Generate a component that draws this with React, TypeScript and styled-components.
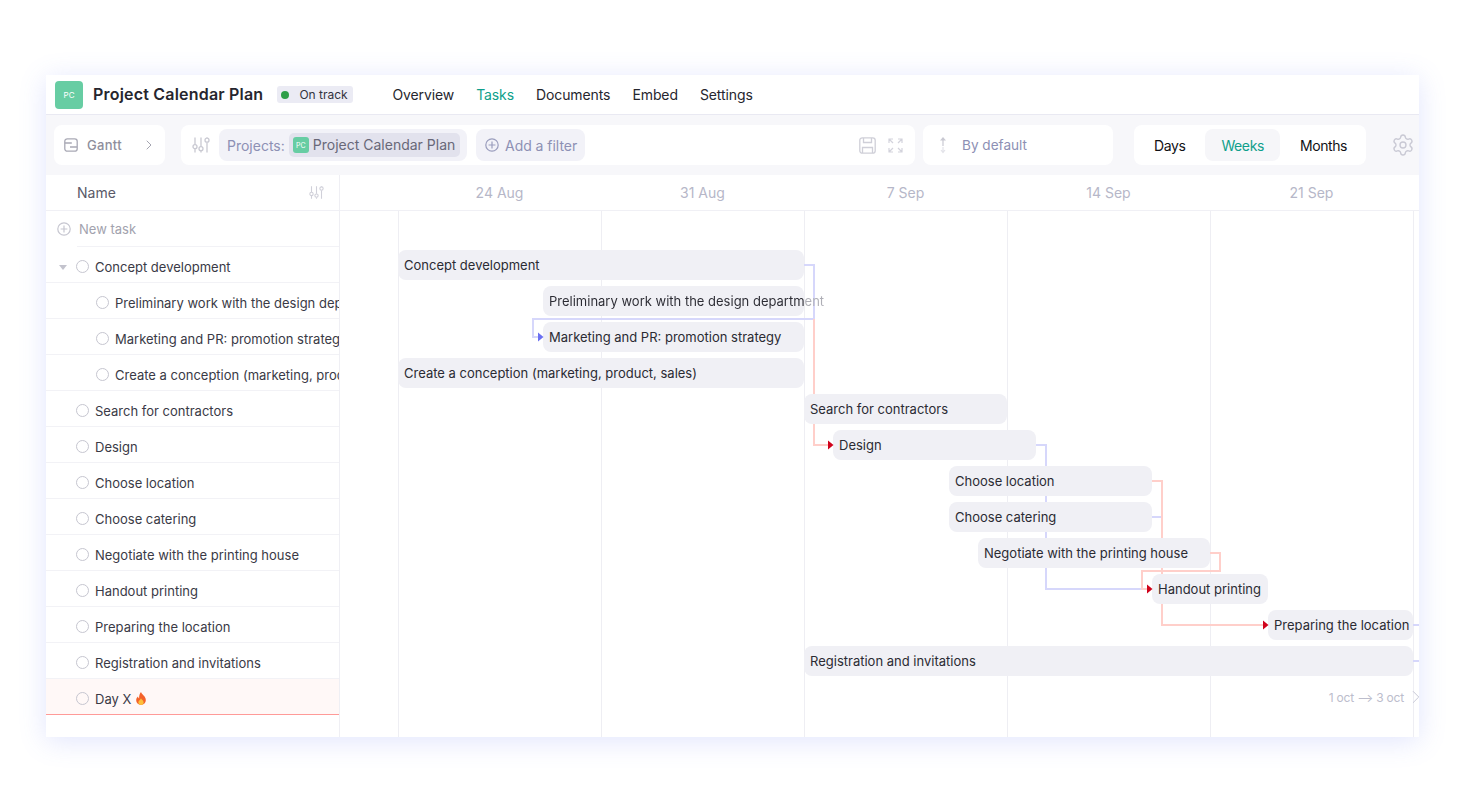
import React from 'react';
import styled, { createGlobalStyle } from 'styled-components';
import { ChevronRight, Settings } from 'lucide-react';

const Global = createGlobalStyle`
  html, body { margin: 0; padding: 0; background: #fff; }
  body { font-family: Inter, "Noto Sans", sans-serif; -webkit-font-smoothing: antialiased; }
  * { box-sizing: border-box; }
`;

const Page = styled.div`
  width: 1466px;
  height: 811px;
  padding: 75px 47px 0 46px;
  overflow: hidden;
`;
const Card = styled.div`
  width: 1373px;
  height: 662px;
  background: #fff;
  box-shadow: 0 4px 26px rgba(90, 110, 245, 0.18);
  display: flex;
  flex-direction: column;
  overflow: hidden;
`;
const Header = styled.header`
  height: 40px;
  flex: none;
  display: flex;
  align-items: center;
  padding-left: 9px;
  border-bottom: 1px solid #e9e9f2;
`;
const Logo = styled.div<{ $small?: boolean }>`
  width: ${p => (p.$small ? 16 : 28)}px;
  height: ${p => (p.$small ? 16 : 28)}px;
  border-radius: ${p => (p.$small ? 3 : 4)}px;
  background: #67cda3;
  color: #fff;
  display: flex;
  align-items: center;
  justify-content: center;
  font-size: ${p => (p.$small ? 7 : 8)}px;
  flex: none;
`;
const Title = styled.h1`
  margin: 0 0 0 10px;
  padding-bottom: 2px;
  font-size: 16px;
  font-weight: 600;
  letter-spacing: 0.2px;
  color: #26262e;
  line-height: 20px;
  white-space: nowrap;
`;
const Badge = styled.div`
  margin-left: 14px;
  height: 17px;
  width: 76px;
  background: #ebebf4;
  border-radius: 3px;
  display: flex;
  align-items: center;
  padding-left: 4px;
  gap: 10px;
  font-size: 12px;
  color: #33333d;
`;
const Dot = styled.span`
  width: 8px;
  height: 8px;
  border-radius: 50%;
  background: #2e9e48;
`;
const Nav = styled.nav`
  margin-left: 39px;
  display: flex;
  gap: 22px;
`;
const NavItem = styled.span<{ $active?: boolean }>`
  font-size: 14px;
  letter-spacing: -0.1px;
  color: ${p => (p.$active ? '#109f8b' : '#26262e')};
`;
const Toolbar = styled.div`
  height: 60px;
  flex: none;
  background: #f7f7fa;
  display: flex;
  align-items: center;
  padding-left: 8px;
`;
const Panel = styled.div<{ $w: number; $ml: number }>`
  width: ${p => p.$w}px;
  margin-left: ${p => p.$ml}px;
  height: 40px;
  background: #fff;
  border-radius: 8px;
  display: flex;
  align-items: center;
  flex: none;
`;
const IconSlot = styled.span<{ $ml?: number; $mr?: number }>`
  display: flex;
  flex: none;
  margin-left: ${p => p.$ml ?? 0}px;
  margin-right: ${p => p.$mr ?? 0}px;
`;
const GanttLabel = styled.span`
  margin-left: 9px;
  font-size: 13px;
  font-weight: 500;
  letter-spacing: 0.3px;
  color: #8e8e9c;
  flex: 1;
`;
const FilterChip = styled.div<{ $w: number; $ml: number }>`
  width: ${p => p.$w}px;
  margin-left: ${p => p.$ml}px;
  height: 32px;
  border-radius: 8px;
  background: #f2f2f8;
  display: flex;
  align-items: center;
  font-size: 14px;
  color: #8d90b4;
  flex: none;
`;
const ChipLabel = styled.span`
  margin-left: 8px;
`;
const FilterText = styled.span`
  letter-spacing: -0.03px;
`;
const ProjectChip = styled.div`
  margin-left: 4px;
  width: 171px;
  height: 24px;
  border-radius: 5px;
  background: #e2e2ed;
  display: flex;
  align-items: center;
  padding-left: 4px;
  gap: 4px;
  color: #686878;
  font-size: 14px;
  white-space: nowrap;
`;
const ProjectName = styled.span`
  padding-bottom: 2px;
`;
const Spring = styled.div`
  flex: 1;
`;
const SortLabel = styled.span`
  margin-left: 14px;
  font-size: 13.6px;
  color: #8d90b4;
`;
const SegmentGroup = styled.div`
  display: flex;
  align-items: center;
  gap: 20px;
  padding-left: 20px;
`;
const Segment = styled.div<{ $active?: boolean }>`
  height: 32px;
  padding: 0 ${p => (p.$active ? 16 : 0)}px;
  border-radius: 8px;
  display: flex;
  align-items: center;
  font-size: 14px;
  letter-spacing: -0.4px;
  color: ${p => (p.$active ? '#109f8b' : '#111116')};
  background: ${p => (p.$active ? '#f6f6f9' : 'transparent')};
`;
const GearSlot = styled.div`
  margin-left: 25px;
  color: #c9c9d4;
  display: flex;
`;
const Body = styled.div`
  flex: 1;
  display: flex;
  min-height: 0;
`;
const Sidebar = styled.aside`
  width: 294px;
  flex: none;
  border-right: 1px solid #efeff4;
  display: flex;
  flex-direction: column;
`;
const NameHead = styled.div`
  height: 36px;
  flex: none;
  border-bottom: 1px solid #f0f0f5;
  display: flex;
  align-items: center;
  padding: 0 15px 0 31px;
  justify-content: space-between;
  font-size: 14px;
  color: #5a5a68;
`;
const NewTask = styled.div`
  height: 36px;
  flex: none;
  position: relative;
  display: flex;
  align-items: center;
  padding: 0 0 0 11px;
  gap: 8px;
  font-size: 13px;
  color: #a2a2ae;
  &::after {
    content: '';
    position: absolute;
    left: 31px;
    right: 0;
    bottom: 0;
    height: 1px;
    background: #f2f2f6;
  }
`;
const Row = styled.div<{ $level: number; $hot?: boolean }>`
  height: 36px;
  flex: none;
  display: flex;
  align-items: center;
  padding: 4px 0 0 ${p => (p.$level ? 50 : 30)}px;
  gap: 6px;
  font-size: 13px;
  color: #3a3a46;
  white-space: nowrap;
  overflow: hidden;
  position: relative;
  background: ${p => (p.$hot ? '#fff8f7' : 'transparent')};
  border-bottom: 1px solid ${p => (p.$hot ? '#ff9a98' : '#f2f2f6')};
`;
const Caret = styled.span`
  position: absolute;
  left: 13px;
  top: 18px;
  width: 0;
  height: 0;
  border-left: 4px solid transparent;
  border-right: 4px solid transparent;
  border-top: 5px solid #c3c3cd;
`;
const Circle = styled.span`
  width: 13px;
  height: 13px;
  border-radius: 50%;
  border: 1.6px solid #c6c6d0;
  flex: none;
`;
const Flame = styled.svg`
  margin-left: -2px;
  flex: none;
`;
const Chart = styled.section`
  flex: 1;
  display: flex;
  flex-direction: column;
  min-width: 0;
`;
const ChartHead = styled.div`
  height: 36px;
  flex: none;
  border-bottom: 1px solid #f0f0f5;
  display: flex;
  padding-left: 58px;
`;
const DateCell = styled.div`
  width: 203px;
  flex: none;
  text-align: center;
  font-size: 14px;
  line-height: 35px;
  color: #b6b7c8;
`;
const Canvas = styled.div`
  flex: 1;
  position: relative;
  overflow: hidden;
`;
const Grid = styled.div`
  position: absolute;
  inset: 0;
  display: flex;
  padding-left: 58px;
`;
const GridCol = styled.div`
  width: 203px;
  flex: none;
  border-left: 1px solid #eeeef3;
`;
const Links = styled.svg`
  position: absolute;
  left: 0;
  top: 0;
`;
const Bar = styled.div<{ $x: number; $y: number; $w: number }>`
  position: absolute;
  left: ${p => p.$x}px;
  top: ${p => p.$y}px;
  width: ${p => p.$w}px;
  height: 30px;
  border-radius: 8px;
  background: #f0f0f5;
  display: flex;
  align-items: center;
  padding-left: 6px;
  font-size: 13px;
  color: #2b2b33;
  white-space: nowrap;
`;
const FadedText = styled.span`
  background: linear-gradient(90deg, #2b2b33 255px, #aeaeb6 255px);
  -webkit-background-clip: text;
  background-clip: text;
  color: transparent;
`;
const Range = styled.div`
  position: absolute;
  right: -8px;
  top: 475px;
  display: flex;
  align-items: center;
  gap: 1px;
  font-size: 12px;
  letter-spacing: -0.2px;
  color: #bcbdcc;
  white-space: nowrap;
`;

const tasks: { name: string; level: number; caret?: boolean; hot?: boolean }[] = [
  { name: 'Concept development', level: 0, caret: true },
  { name: 'Preliminary work with the design department', level: 1 },
  { name: 'Marketing and PR: promotion strategy', level: 1 },
  { name: 'Create a conception (marketing, product, sales)', level: 1 },
  { name: 'Search for contractors', level: 0 },
  { name: 'Design', level: 0 },
  { name: 'Choose location', level: 0 },
  { name: 'Choose catering', level: 0 },
  { name: 'Negotiate with the printing house', level: 0 },
  { name: 'Handout printing', level: 0 },
  { name: 'Preparing the location', level: 0 },
  { name: 'Registration and invitations', level: 0 },
  { name: 'Day X', level: 0, hot: true },
];

const bars: { name: string; from: number; to: number; faded?: boolean }[] = [
  { name: 'Concept development', from: 398, to: 804 },
  { name: 'Preliminary work with the design department', from: 543, to: 804, faded: true },
  { name: 'Marketing and PR: promotion strategy', from: 543, to: 804 },
  { name: 'Create a conception (marketing, product, sales)', from: 398, to: 804 },
  { name: 'Search for contractors', from: 804, to: 1007 },
  { name: 'Design', from: 833, to: 1036 },
  { name: 'Choose location', from: 949, to: 1152 },
  { name: 'Choose catering', from: 949, to: 1152 },
  { name: 'Negotiate with the printing house', from: 978, to: 1210 },
  { name: 'Handout printing', from: 1152, to: 1268 },
  { name: 'Preparing the location', from: 1268, to: 1413 },
  { name: 'Registration and invitations', from: 804, to: 1413 },
];

const OX = 340;
const OY = 211;
const pts = (list: number[][]) => list.map(([x, y]) => `${x - OX},${y - OY}`).join(' ');

const blue = '#d6d7fb';
const pink = '#ffcfca';
const blueLinks = [
  [[804, 265], [814, 265], [814, 319], [533, 319], [533, 337], [540, 337]],
  [[1036, 445], [1046, 445], [1046, 589], [1148, 589]],
  [[1152, 517], [1162, 517]],
  [[1413, 625], [1419, 625]],
  [[1413, 661], [1419, 661]],
];
const pinkLinks = [
  [[814, 319], [814, 445], [830, 445]],
  [[1152, 481], [1162, 481], [1162, 625], [1265, 625]],
  [[1210, 553], [1220, 553], [1220, 571], [1142, 571], [1142, 589], [1149, 589]],
];
const arrows: { x: number; y: number; c: string }[] = [
  { x: 538, y: 337, c: '#6b70f2' },
  { x: 828, y: 445, c: '#d0021b' },
  { x: 1147, y: 589, c: '#d0021b' },
  { x: 1263, y: 625, c: '#d0021b' },
];

const SlidersIcon = ({ size = 18, color = '#c9c9d2' }: { size?: number; color?: string }) => (
  <svg width={size} height={size} viewBox="0 0 18 18" fill="none" stroke={color} strokeWidth="1.3">
    <path d="M3 1.5v7M3 13v3.5M9 1.5v9M9 15v1.5M15 1.5v.5M15 6.5v10" />
    <circle cx="3" cy="10.7" r="2" />
    <circle cx="9" cy="12.7" r="2" />
    <circle cx="15" cy="4.2" r="2" />
  </svg>
);
const PlusCircle = ({ size = 14, color = '#c6c6d0' }: { size?: number; color?: string }) => (
  <svg width={size} height={size} viewBox="0 0 14 14" fill="none" stroke={color} strokeWidth="1.2">
    <circle cx="7" cy="7" r="6.2" />
    <path d="M7 3.6v6.8M3.6 7h6.8" />
  </svg>
);

export default function App() {
  return (
    <Page>
      <Global />
      <Card>
        <Header>
          <Logo>PC</Logo>
          <Title>Project Calendar Plan</Title>
          <Badge><Dot />On track</Badge>
          <Nav>
            <NavItem>Overview</NavItem>
            <NavItem $active>Tasks</NavItem>
            <NavItem>Documents</NavItem>
            <NavItem>Embed</NavItem>
            <NavItem>Settings</NavItem>
          </Nav>
        </Header>
        <Toolbar>
          <Panel $w={111} $ml={0}>
            <IconSlot $ml={10}>
              <svg width="14" height="14" viewBox="0 0 14 14" fill="none" stroke="#a9a9b5" strokeWidth="1.3">
                <rect x="0.8" y="0.8" width="12.4" height="12.4" rx="2.5" />
                <path d="M0.8 5h7M6 9h7" />
              </svg>
            </IconSlot>
            <GanttLabel>Gantt</GanttLabel>
            <IconSlot $mr={8}><ChevronRight size={16} strokeWidth={1.5} color="#a4a4b0" /></IconSlot>
          </Panel>
          <Panel $w={734} $ml={16}>
            <IconSlot $ml={11}><SlidersIcon /></IconSlot>
            <FilterChip $w={248} $ml={9}>
              <ChipLabel>Projects:</ChipLabel>
              <ProjectChip><Logo $small>PC</Logo><ProjectName>Project Calendar Plan</ProjectName></ProjectChip>
            </FilterChip>
            <FilterChip $w={109} $ml={9}>
              <IconSlot $ml={9} $mr={6}><PlusCircle color="#9a9dbd" /></IconSlot>
              <FilterText>Add a filter</FilterText>
            </FilterChip>
            <Spring />
            <IconSlot $mr={12}>
              <svg width="17" height="17" viewBox="0 0 17 17" fill="none" stroke="#cfcfd8" strokeWidth="1.3">
                <rect x="0.8" y="0.8" width="15.4" height="15.4" rx="2.5" />
                <path d="M4.5 1v4.5h8V1M3.5 16v-5.5h10V16" />
              </svg>
            </IconSlot>
            <IconSlot $mr={12}>
              <svg width="15" height="15" viewBox="0 0 15 15" fill="none" stroke="#d3d3dc" strokeWidth="1.2">
                <path d="M1 5V1h4M1 1l4 4M10 1h4v4M14 1l-4 4M1 10v4h4M1 14l4-4M14 10v4h-4M14 14l-4-4" />
              </svg>
            </IconSlot>
          </Panel>
          <Panel $w={190} $ml={8}>
            <IconSlot $ml={15}>
              <svg width="10" height="18" viewBox="0 0 10 18" fill="none">
                <path d="M5 1L2 4.5h6z" fill="#c9c9d2" />
                <path d="M5 4v6" stroke="#c9c9d2" strokeWidth="1.2" />
                <path d="M5 11v5M3 14l2 2.5 2-2.5" stroke="#e3e3e9" strokeWidth="1.2" />
              </svg>
            </IconSlot>
            <SortLabel>By default</SortLabel>
          </Panel>
          <Panel $w={232} $ml={21}>
            <SegmentGroup>
              <Segment>Days</Segment>
              <Segment $active>Weeks</Segment>
              <Segment>Months</Segment>
            </SegmentGroup>
          </Panel>
          <GearSlot><Settings size={24} strokeWidth={1.35} /></GearSlot>
        </Toolbar>
        <Body>
          <Sidebar>
            <NameHead>Name<SlidersIcon size={15} color="#d0d0d9" /></NameHead>
            <NewTask><PlusCircle />New task</NewTask>
            {tasks.map(t => (
              <Row key={t.name} $level={t.level} $hot={t.hot}>
                {t.caret && <Caret />}
                <Circle />
                {t.name}
                {t.hot && (
                  <Flame width="12" height="13" viewBox="0 0 12 13">
                    <path d="M6 0c.5 2.4 4.800 4 4.800 8A4.800 4.800 0 0 1 6 13a4.800 4.800 0 0 1-4.800-5c0-1.600.8-2.800 1.800-3.600.1 1 .5 1.600 1.100 2C4 4 4.500 1.600 6 0z" fill="#f4622a" />
                    <path d="M6 6.200c.4 1.300 2.600 2.200 2.600 4A2.600 2.600 0 0 1 6 13a2.600 2.600 0 0 1-2.600-2.800c0-1.800 2.200-2.400 2.600-4z" fill="#fdc03a" />
                  </Flame>
                )}
              </Row>
            ))}
          </Sidebar>
          <Chart>
            <ChartHead>
              {['24 Aug', '31 Aug', '7 Sep', '14 Sep', '21 Sep'].map(d => <DateCell key={d}>{d}</DateCell>)}
            </ChartHead>
            <Canvas>
              <Grid>
                {[0, 1, 2, 3, 4, 5].map(i => <GridCol key={i} />)}
              </Grid>
              <Links width="1079" height="526" fill="none" strokeWidth="2">
                {blueLinks.map((l, i) => <polyline key={i} points={pts(l)} stroke={blue} />)}
                {pinkLinks.map((l, i) => <polyline key={i} points={pts(l)} stroke={pink} />)}
              </Links>
              {bars.map((b, i) => (
                <Bar key={b.name} $x={b.from - OX} $y={39 + i * 36} $w={b.to - b.from}>
                  {b.faded ? <FadedText>{b.name}</FadedText> : b.name}
                </Bar>
              ))}
              <Links width="1079" height="526">
                {arrows.map((a, i) => (
                  <path key={i} d={`M${a.x - OX} ${a.y - OY - 4.5}l5.500 4.500l-5.500 4.500z`} fill={a.c} />
                ))}
              </Links>
              <Range>
                1 oct ⟶ 3 oct
                <ChevronRight size={22} strokeWidth={1} color="#c2c3d2" />
              </Range>
            </Canvas>
          </Chart>
        </Body>
      </Card>
    </Page>
  );
}
